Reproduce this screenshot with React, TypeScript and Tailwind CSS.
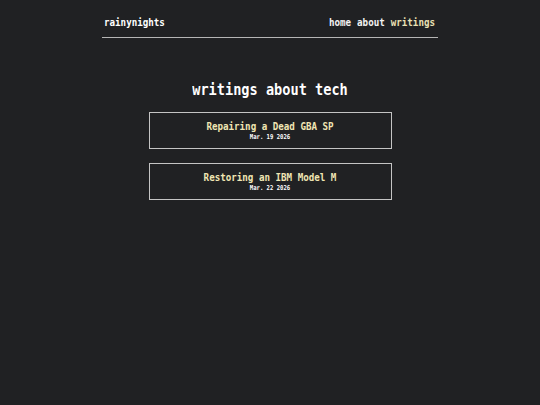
export default function App() {
  const posts = [
    { title: "Repairing a Dead GBA SP", date: "Mar. 19 2026" },
    { title: "Restoring an IBM Model M", date: "Mar. 22 2026" },
  ];
  return (
    <div className="min-h-[405px] w-full bg-[#202123] text-[#eeeeee] font-['DejaVu_Sans_Mono',monospace] font-bold">
      <div className="mx-auto w-[336px]">
        <header className="flex items-center justify-between border-b border-[#b5b5b5] pt-[16px] pb-[9px] pl-[2px] pr-[3px] text-[9.2px] leading-[12px]">
          <span className="inline-block scale-y-[1.2] text-white">rainynights</span>
          <nav className="flex gap-[6px]">
            <span className="inline-block scale-y-[1.2] text-[#f2f2f2]">home</span>
            <span className="inline-block scale-y-[1.2] text-[#f2f2f2]">about</span>
            <span className="inline-block scale-y-[1.2] text-[#e9e0b4]">writings</span>
          </nav>
        </header>
        <h1 className="mt-[43px] text-center text-[13.6px] leading-[16px] text-white">
          <span className="inline-block scale-y-[1.2]">writings about tech</span>
        </h1>
        <div className="mt-[15px] flex flex-col items-center gap-[14px]">
          {posts.map((p) => (
            <div
              key={p.title}
              className="flex h-[37px] w-[243px] flex-col items-center justify-center gap-[3px] border-[1.5px] border-[#c4c4c4]"
            >
              <span className="inline-block scale-y-[1.2] text-[9.2px] leading-[10px] text-[#f0e6b4]">{p.title}</span>
              <span className="inline-block scale-y-[1.2] text-[5.6px] leading-[6px] text-white">{p.date}</span>
            </div>
          ))}
        </div>
      </div>
    </div>
  );
}
